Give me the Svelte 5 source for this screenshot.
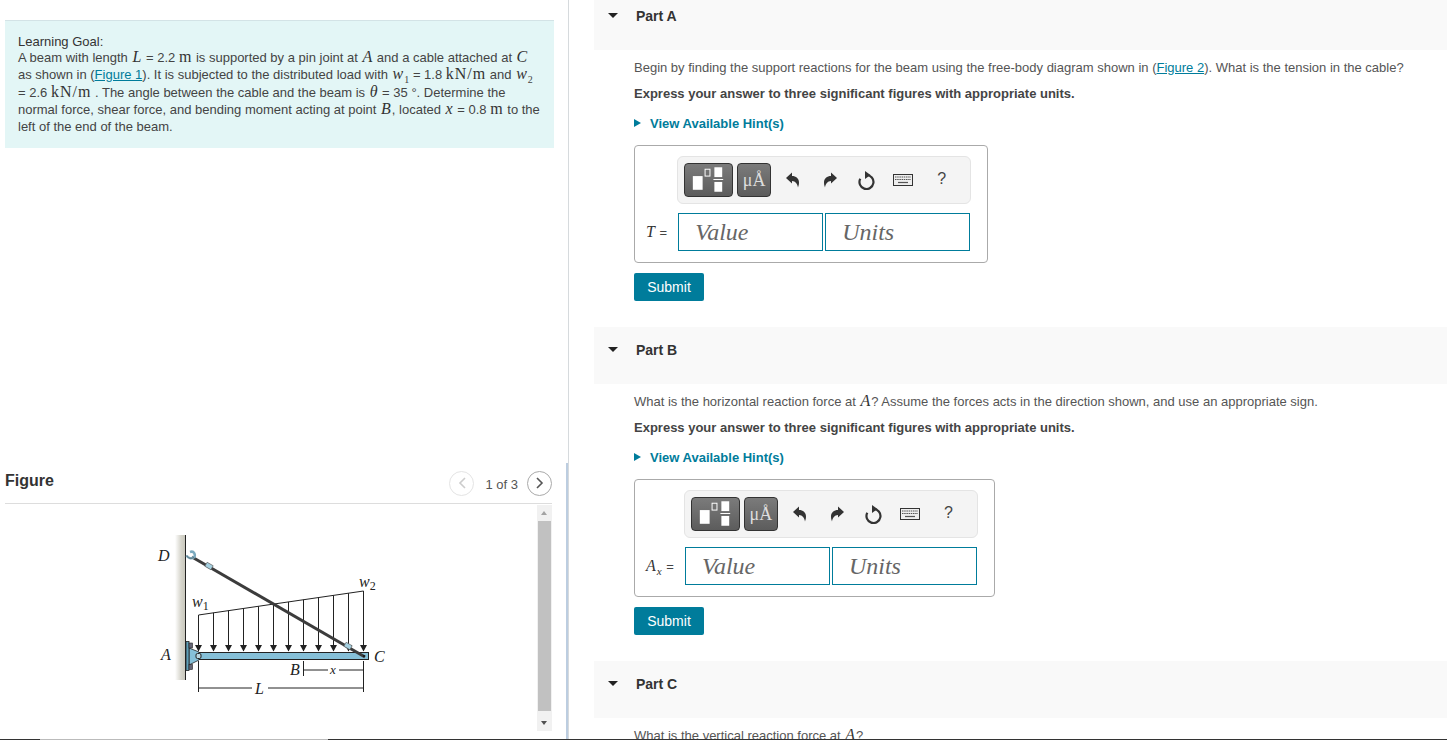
<script>
  const arrows = [198.5, 213.5, 228.5, 243.5, 258.5, 273.5, 288.5, 303.5, 318.5, 333.5, 348.5, 363.5];
  const loadTop = (x) => 615 - ((x - 198.5) / 165) * 24;
</script>

{#snippet answer(label, sub)}
  <div class="answer">
    <div class="toolbar">
      <span class="tool tool-template">
        <svg width="48" height="32" viewBox="0 0 48 32">
          <rect x="8" y="12" width="10" height="14" fill="#fff" />
          <rect x="20.5" y="5" width="5" height="7" fill="none" stroke="#fff" />
          <rect x="30" y="3" width="8" height="10" fill="#fff" />
          <rect x="29" y="15" width="10" height="1" fill="#fff" />
          <rect x="30" y="18" width="8" height="10" fill="#fff" />
        </svg>
      </span>
      <span class="tool tool-units">μÅ</span>
      <svg class="icon undo" width="15" height="16" viewBox="0 0 15 16">
        <path d="M1 6 7 .5V4c4 0 7 2.500 7 6.500 0 2-.5 3.500-1 5-.5-3.500-2.500-6.500-6-6.500v2.500z" fill="#333" />
      </svg>
      <svg class="icon redo" width="15" height="16" viewBox="0 0 15 16">
        <path d="M14 6 8 .5V4C4 4 1 6.500 1 10.500c0 2 .5 3.500 1 5 .5-3.500 2.500-6.500 6-6.500v2.500z" fill="#333" />
      </svg>
      <svg class="icon reset" width="18" height="19" viewBox="0 0 18 19">
        <path d="M9.500 4a7 7 0 1 1-6.200 3.700" fill="none" stroke="#333" stroke-width="2.200" />
        <path d="M8 0 13.500 4 8 8z" fill="#333" />
      </svg>
      <svg class="icon keys" width="20" height="12" viewBox="0 0 20 12">
        <rect x="0.500" y="0.500" width="19" height="11" fill="#eee" stroke="#333" />
        <path d="M2 3h16M2 5.500h16" stroke="#555" stroke-width="1.200" stroke-dasharray="1.500 .7" />
        <path d="M5 8.500h10" stroke="#555" stroke-width="1.200" />
      </svg>
      <span class="help">?</span>
    </div>
    <span class="label"><i>{label}</i>{#if sub}<sub><i>{sub}</i></sub>{/if} =</span>
    <div class="inputs">
      <span class="field">Value</span>
      <span class="field">Units</span>
    </div>
  </div>
  <button class="submit">Submit</button>
{/snippet}

{#snippet partHead(name)}
  <div class="part-head">
    <span class="caret"></span>
    <span>{name}</span>
  </div>
{/snippet}

<div class="page">
  <div class="left">
    <section class="goal">
      <div class="goal-title">Learning Goal:</div>
      A beam with length <i class="m">L</i> = 2.2 <span class="u">m</span> is supported by a pin joint at <i class="m">A</i> and a cable attached at <i class="m">C</i><br />
      as shown in (<a href="#f1">Figure 1</a>). It is subjected to the distributed load with <i class="m">w</i><sub class="s">1</sub> = 1.8 <span class="u">kN/m</span> and <i class="m">w</i><sub class="s">2</sub><br />
      = 2.6 <span class="u">kN/m</span> . The angle between the cable and the beam is <i class="m">θ</i> = 35 °. Determine the<br />
      normal force, shear force, and bending moment acting at point <i class="m">B</i>, located <i class="m">x</i> = 0.8 <span class="u">m</span> to the<br />
      left of the end of the beam.
    </section>

    <section class="figure">
      <header class="figure-head">
        <strong>Figure</strong>
        <div class="pager">
          <span class="round off">
            <svg width="8" height="12" viewBox="0 0 8 12"><path d="M7 1 2 6l5 5" fill="none" stroke="#ccc" stroke-width="1.600" /></svg>
          </span>
          <span class="count">1 of 3</span>
          <span class="round">
            <svg width="8" height="12" viewBox="0 0 8 12"><path d="M1 1l5 5-5 5" fill="none" stroke="#555" stroke-width="1.600" /></svg>
          </span>
        </div>
      </header>
      <div class="figure-body">
        <svg class="diagram" width="532" height="226" viewBox="0 505 532 226">
          <defs>
            <linearGradient id="wall" x1="0" x2="1" y1="0" y2="0">
              <stop offset="0" stop-color="#fff" />
              <stop offset="0.6" stop-color="#d6d5cc" />
              <stop offset="1" stop-color="#c9c8bd" />
            </linearGradient>
            <marker id="head" markerUnits="userSpaceOnUse" markerWidth="7" markerHeight="8" refX="6" refY="4" orient="auto">
              <path d="M0 0.500 6.500 4 0 7.500z" fill="#222" />
            </marker>
          </defs>

          <rect x="175" y="535" width="10" height="145" fill="url(#wall)" />
          <path d="M185.500 535V680" stroke="#222" />

          <!-- distributed load -->
          <path d="M198.500 615 363.500 591" stroke="#222" fill="none" />
          {#each arrows as x}
            <path d="M{x} {loadTop(x)}V651" stroke="#222" marker-end="url(#head)" />
          {/each}

          <!-- beam and bracket -->
          <rect x="198.500" y="652.500" width="170" height="7" fill="#86c0d8" stroke="#222" />
          <path d="M189 648 199 652V660L189 665z" fill="#86c0d8" stroke="#222" stroke-width="0.800" />
          <rect x="186" y="641.500" width="3" height="29" fill="#5f9fb8" stroke="#222" stroke-width="0.800" />
          <rect x="189" y="643" width="3.500" height="5" fill="#667" stroke="#222" stroke-width="0.600" />
          <rect x="189" y="664.500" width="3.500" height="5" fill="#667" stroke="#222" stroke-width="0.600" />
          <rect x="196" y="653.500" width="5" height="5" rx="1.500" fill="#b9d6e0" stroke="#222" />

          <!-- cable -->
          <path d="M192 557 365 657" stroke="#3c3c3c" stroke-width="3" />
          <path d="M186.500 555.500c2 3.500 5.500 3.500 7.500 1.500M190 552c4-1.500 6 2.500 4 6" fill="none" stroke="#7aa9be" stroke-width="2.500" />
          <path d="M186.500 555.500c2 3.500 5.500 3.500 7.500 1.500" fill="none" stroke="#444" stroke-width="0.500" />
          <rect x="-3.500" y="-2.300" width="7" height="4.600" fill="#a5d0e0" stroke="#555" stroke-width="0.600" transform="translate(209 566) rotate(30)" />
          <rect x="-3.500" y="-2.300" width="7" height="4.600" fill="#a5d0e0" stroke="#555" stroke-width="0.600" transform="translate(348 646) rotate(30)" />
          <circle cx="364" cy="656" r="1" fill="#111" />

          <!-- dimensions -->
          <path d="M198.500 661V692M363.500 661V692M303.500 661V676" stroke="#222" />
          <path d="M303.500 670H328M339 670H363.500M198.500 688H252M268 688H363.500" stroke="#222" />

          <text class="fig" x="158" y="561">D</text>
          <text class="fig" x="161" y="660">A</text>
          <text class="fig" x="290" y="675">B</text>
          <text class="fig" x="374" y="662">C</text>
          <text class="fig" x="255" y="694">L</text>
          <text class="fig small" x="330" y="674">x</text>
          <text class="fig" x="192" y="607">w<tspan class="idx" dy="3">1</tspan></text>
          <text class="fig" x="359" y="587">w<tspan class="idx" dy="3">2</tspan></text>
        </svg>
        <div class="scrollbar">
          <span class="up"></span>
          <span class="thumb"></span>
          <span class="down"></span>
        </div>
      </div>
    </section>
  </div>

  <div class="right">
    <section class="part">
      {@render partHead('Part A')}
      <p class="first">Begin by finding the support reactions for the beam using the free-body diagram shown in (<a href="#f2">Figure 2</a>). What is the tension in the cable?</p>
      <p class="strong">Express your answer to three significant figures with appropriate units.</p>
      <div class="hint"><span class="hint-caret"></span>View Available Hint(s)</div>
      {@render answer('T', '')}
    </section>

    <section class="part">
      {@render partHead('Part B')}
      <p class="first">What is the horizontal reaction force at <i class="m">A</i>? Assume the forces acts in the direction shown, and use an appropriate sign.</p>
      <p class="strong">Express your answer to three significant figures with appropriate units.</p>
      <div class="hint"><span class="hint-caret"></span>View Available Hint(s)</div>
      {@render answer('A', 'x')}
    </section>

    <section class="part">
      {@render partHead('Part C')}
      <p class="first">What is the vertical reaction force at <i class="m">A</i>?</p>
    </section>
  </div>

  <div class="edge"></div>
</div>

<style>
  :global(body) {
    margin: 0;
    background: #fff;
  }

  .page {
    position: relative;
    display: flex;
    height: 740px;
    overflow: hidden;
    font-family: "Liberation Sans", Arial, sans-serif;
    font-size: 13px;
    color: #444;
  }

  a {
    color: #007c9b;
    text-decoration: underline;
  }

  .m {
    font-family: "Liberation Serif", serif;
    font-size: 16px;
    line-height: 0;
    font-style: italic;
    color: #333;
    padding: 0 1px;
  }

  .u {
    font-family: "Liberation Serif", serif;
    font-size: 16px;
    line-height: 0;
    color: #333;
    letter-spacing: 1px;
  }

  .s {
    font-family: "Liberation Serif", serif;
    font-size: 10px;
    line-height: 0;
  }

  /* left column */
  .left {
    flex: none;
    width: 568px;
    border-right: 1px solid #d6dadd;
  }

  .goal {
    margin: 20px 14px 0 5px;
    height: 114px;
    padding: 13px 0 0 13px;
    background: #e3f6f6;
    border-top: 1px solid #d3e3e6;
    line-height: 17.300px;
    white-space: nowrap;
  }

  .goal-title {
    color: #333;
    line-height: 15px;
  }

  .figure {
    width: 566px;
    margin-top: 315px;
    height: 277px;
    border-right: 2px solid #bccde0;
  }

  .figure-head {
    display: flex;
    align-items: center;
    justify-content: space-between;
    height: 41px;
    box-sizing: border-box;
    margin: 0 14px 0 5px;
    border-bottom: 1px solid #ddd;
  }

  .figure-head strong {
    position: relative;
    top: -2px;
    font-size: 16px;
    font-weight: 700;
    color: #333;
  }

  .pager {
    display: flex;
    align-items: center;
    gap: 10px;
    font-size: 13px;
    color: #555;
  }

  .count {
    position: relative;
    top: 1px;
    left: 1px;
  }

  .round {
    display: flex;
    align-items: center;
    justify-content: center;
    width: 25px;
    height: 25px;
    box-sizing: border-box;
    border: 1px solid #aaa;
    border-radius: 50%;
  }

  .round.off {
    border-color: #e4e4e4;
  }

  .figure-body {
    display: flex;
    margin-top: 1px;
  }

  .diagram {
    flex: none;
    display: block;
    margin-right: 5px;
  }

  .fig {
    font-family: "Liberation Serif", serif;
    font-style: italic;
    font-size: 16px;
    fill: #222;
  }

  .fig.small {
    font-size: 13px;
  }

  .idx {
    font-style: normal;
    font-size: 12px;
  }

  .scrollbar {
    position: relative;
    width: 15px;
    height: 226px;
    background: #f1f1f1;
  }

  .thumb {
    position: absolute;
    left: 1px;
    right: 1px;
    top: 16px;
    height: 190px;
    background: #c1c1c1;
  }

  .up,
  .down {
    position: absolute;
    left: 4px;
    width: 0;
    height: 0;
    border-left: 3.500px solid transparent;
    border-right: 3.500px solid transparent;
  }

  .up {
    top: 6px;
    border-bottom: 4px solid #a3a3a3;
  }

  .down {
    bottom: 6px;
    border-top: 4px solid #505050;
  }

  /* right column */
  .right {
    flex: 1;
    margin-top: -7px;
    padding-left: 25px;
    min-width: 0;
  }

  .part {
    height: 334px;
  }

  .part-head {
    display: flex;
    align-items: flex-start;
    height: 57px;
    box-sizing: border-box;
    padding: 15px 0 0 14px;
    background: #f9f9f9;
    font-weight: 700;
    font-size: 14px;
    line-height: 16px;
    color: #333;
  }

  .caret {
    width: 0;
    height: 0;
    margin: 5px 18px 0 0;
    border-left: 5.500px solid transparent;
    border-right: 5.500px solid transparent;
    border-top: 5.500px solid #222;
  }

  p {
    margin: 10px 0 0 40px;
    line-height: 16px;
    font-size: 13px;
    white-space: nowrap;
    color: #555;
  }

  p.first {
    margin-top: 10px;
  }

  p.strong {
    font-weight: 700;
    color: #444;
  }

  .hint {
    display: flex;
    align-items: center;
    margin: 13px 0 14px 40px;
    height: 16px;
    font-weight: 700;
    font-size: 13px;
    color: #007c9b;
  }

  .hint-caret {
    width: 0;
    height: 0;
    margin-right: 9px;
    border-top: 4.500px solid transparent;
    border-bottom: 4.500px solid transparent;
    border-left: 7px solid #007c9b;
  }

  .answer {
    display: inline-grid;
    grid-template-columns: auto auto;
    row-gap: 9px;
    align-items: center;
    margin-left: 40px;
    padding: 10px 16px 11px 0;
    border: 1px solid #aaa;
    border-radius: 4px;
  }

  .toolbar {
    grid-column: 2;
    display: flex;
    align-items: center;
    width: 294px;
    height: 48px;
    box-sizing: border-box;
    margin-left: -1px;
    padding-left: 6px;
    background: #f4f4f4;
    border: 1px solid #e4e4e4;
    border-radius: 6px;
  }

  .tool {
    display: flex;
    align-items: center;
    justify-content: center;
    height: 34px;
    box-sizing: border-box;
    border: 1px solid #333;
    border-radius: 4px;
    background: linear-gradient(#7b7b7b, #5c5c5c);
  }

  .tool-template {
    width: 49px;
  }

  .tool-units {
    width: 34px;
    margin-left: 4px;
    font-family: "Liberation Serif", serif;
    font-size: 18px;
    color: #ddd;
  }

  .icon {
    flex: none;
    display: block;
  }

  .undo {
    margin-left: 14px;
  }

  .redo {
    margin-left: 23px;
  }

  .reset {
    margin-left: 19px;
  }

  .keys {
    margin-left: 18px;
  }

  .help {
    margin-left: 24px;
    position: relative;
    top: -1px;
    font-size: 16px;
    color: #444;
  }

  .label {
    grid-column: 1;
    padding: 0 11px 0 11px;
    font-size: 13px;
    white-space: nowrap;
    color: #444;
  }

  .label i {
    font-family: "Liberation Serif", serif;
    font-size: 16px;
    color: #333;
    padding-right: 1px;
  }

  .label sub {
    line-height: 0;
  }

  .label sub i {
    font-size: 11px;
  }

  .inputs {
    grid-column: 2;
    display: flex;
    gap: 2px;
  }

  .field {
    width: 145px;
    height: 38px;
    box-sizing: border-box;
    padding-left: 16px;
    border: 1px solid #007c9b;
    font-family: "Liberation Serif", serif;
    font-style: italic;
    font-size: 24px;
    line-height: 36px;
    color: #666;
  }

  .submit {
    display: block;
    width: 70px;
    height: 28px;
    margin: 10px 0 0 40px;
    padding: 0;
    border: none;
    border-radius: 2px;
    background: #007c9b;
    color: #fff;
    font-family: inherit;
    font-size: 14px;
    font-weight: 400;
  }

  /* dark rule at the window's bottom edge */
  .edge {
    position: absolute;
    left: 0;
    right: 0;
    bottom: 0;
    height: 1px;
    background: linear-gradient(to right, #333 40px, #bbb 40px, #bbb 328px, #333 328px);
  }
</style>
